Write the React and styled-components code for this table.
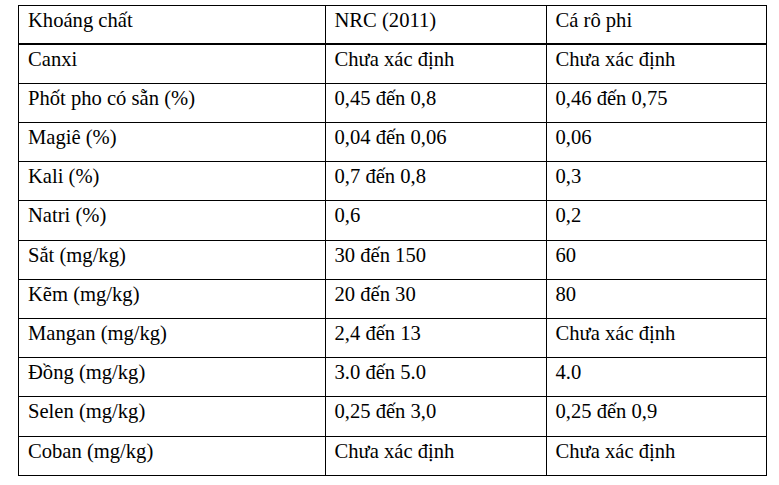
import React from "react";
import styled, { createGlobalStyle } from "styled-components";

const Global = createGlobalStyle`
  html, body { margin: 0; padding: 0; background: #fff; }
  body { font-family: "Liberation Serif", "Times New Roman", serif; color: #000; }
`;

const Page = styled.div`
  padding: 4.5px 0 0 18px;
  width: 779px;
  height: 485px;
  box-sizing: border-box;
  overflow: hidden;
`;

const Table = styled.table`
  border-collapse: collapse;
  table-layout: fixed;
  width: 748px;
  font-size: 20.6px;
  line-height: 23px;
`;

const Col = styled.col`
  width: ${(p) => p.$w}px;
`;

const Row = styled.tr`
  height: 39.2px;
`;

const Cell = styled.td`
  border: 1px solid #000;
  border-bottom-width: ${(p) => (p.$head ? "2px" : "1px")};
  padding: 3px 9px 0 9px;
  vertical-align: top;
  white-space: nowrap;
  font-weight: normal;
  text-align: left;
`;

const Note = styled.p`
  margin: 6.8px 0 0 0;
  font-size: 20.6px;
  line-height: 23px;
  white-space: nowrap;
`;

const rows = [
  ["Canxi", "Chưa xác định", "Chưa xác định"],
  ["Phốt pho có sẵn (%)", "0,45 đến 0,8", "0,46 đến 0,75"],
  ["Magiê (%)", "0,04 đến 0,06", "0,06"],
  ["Kali (%)", "0,7 đến 0,8", "0,3"],
  ["Natri (%)", "0,6", "0,2"],
  ["Sắt (mg/kg)", "30 đến 150", "60"],
  ["Kẽm (mg/kg)", "20 đến 30", "80"],
  ["Mangan (mg/kg)", "2,4 đến 13", "Chưa xác định"],
  ["Đồng (mg/kg)", "3.0 đến 5.0", "4.0"],
  ["Selen (mg/kg)", "0,25 đến 3,0", "0,25 đến 0,9"],
  ["Coban (mg/kg)", "Chưa xác định", "Chưa xác định"],
];

export default function App() {
  return (
    <>
      <Global />
      <Page>
        <Table>
          <colgroup>
            <Col $w={306.5} />
            <Col $w={221} />
            <Col $w={220.5} />
          </colgroup>
          <thead>
            <Row>
              <Cell as="th" $head>Khoáng chất</Cell>
              <Cell as="th" $head>NRC (2011)</Cell>
              <Cell as="th" $head>Cá rô phi</Cell>
            </Row>
          </thead>
          <tbody>
            {rows.map((r, i) => (
              <Row key={i}>
                {r.map((c, j) => (
                  <Cell key={j}>{c}</Cell>
                ))}
              </Row>
            ))}
          </tbody>
        </Table>
        <Note>
          Ghi chú: các giá trị được tính theo tỷ lệ, cấp vào thức ăn khô, xác định qua thử nghiệm, đều được ghi nhận
        </Note>
      </Page>
    </>
  );
}
